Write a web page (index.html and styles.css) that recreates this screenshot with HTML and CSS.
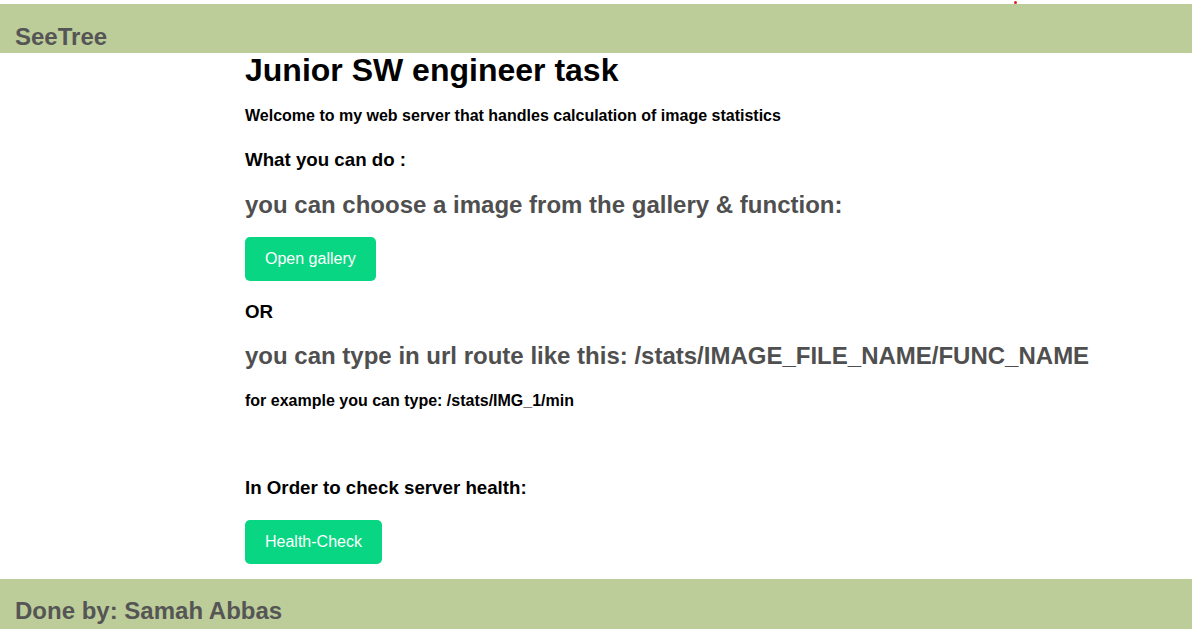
FILE: index.html
```html
<!DOCTYPE html>
<html>
<head>
<meta charset="utf-8">
<title>SeeTree</title>
<link rel="stylesheet" href="styles.css">
</head>
<body>
<span class="dot"></span>
<header class="topbar"><span class="brand">SeeTree</span></header>
<main class="content">
  <h1 class="title">Junior SW engineer task</h1>
  <p class="welcome">Welcome to my web server that handles calculation of image statistics</p>
  <h3 class="sub what">What you can do :</h3>
  <h2 class="option opt1">you can choose a image from the gallery &amp; function:</h2>
  <button class="btn btn-gallery">Open gallery</button>
  <h3 class="sub or">OR</h3>
  <h2 class="option opt2">you can type in url route like this: /stats/IMAGE_FILE_NAME/FUNC_NAME</h2>
  <p class="example">for example you can type: /stats/IMG_1/min</p>
  <h3 class="sub health">In Order to check server health:</h3>
  <button class="btn btn-health">Health-Check</button>
</main>
<footer class="bottombar"><span class="author">Done by: Samah Abbas</span></footer>
</body>
</html>
```
FILE: styles.css
```css
html, body {
  margin: 0;
  padding: 0;
}
body {
  font-family: "Liberation Sans", Arial, sans-serif;
  background: #fff;
  padding-top: 4px;
  box-sizing: border-box;
  min-height: 100vh;
  display: flex;
  flex-direction: column;
  position: relative;
}
.dot {
  position: absolute;
  left: 1014px;
  top: 1px;
  width: 3px;
  height: 3px;
  border-radius: 50%;
  background: #e51b1b;
}
.topbar {
  background: #bccd99;
  height: 49px;
  flex: none;
  box-sizing: border-box;
  padding: 0 15px 2px;
  display: flex;
  align-items: flex-end;
}
.brand {
  font-size: 24px;
  font-weight: bold;
  color: #555;
}
.content {
  flex: 1;
  padding-left: 245px;
  display: flex;
  flex-direction: column;
  align-items: flex-start;
}
.title {
  font-size: 32px;
  margin: 0;
  color: #000;
  line-height: 35px;
}
.welcome {
  font-size: 16px;
  line-height: 18px;
  font-weight: bold;
  margin: 19px 0 0;
}
.sub {
  font-size: 18.72px;
  margin: 0;
}
.option {
  font-size: 24px;
  color: #4f4f4f;
  margin: 0;
}
.what { margin-top: 24px; }
.opt1 { margin-top: 20px; }
.btn {
  font-family: "Liberation Sans", Arial, sans-serif;
  background: #08d683;
  color: #fff;
  border: none;
  border-radius: 5px;
  font-size: 16px;
  height: 44px;
  padding: 0 20px;
}
.btn-gallery { margin-top: 18px; }
.or { margin-top: 20px; }
.opt2 { margin-top: 19px; }
.example {
  font-size: 16px;
  line-height: 18px;
  font-weight: bold;
  margin: 22px 0 0;
}
.health { margin-top: 67px; }
.btn-health { margin-top: 21px; }
.bottombar {
  background: #bccd99;
  height: 50px;
  flex: none;
  box-sizing: border-box;
  padding: 0 15px 4px;
  display: flex;
  align-items: flex-end;
}
.author {
  font-size: 24px;
  font-weight: bold;
  color: #555;
}
```
